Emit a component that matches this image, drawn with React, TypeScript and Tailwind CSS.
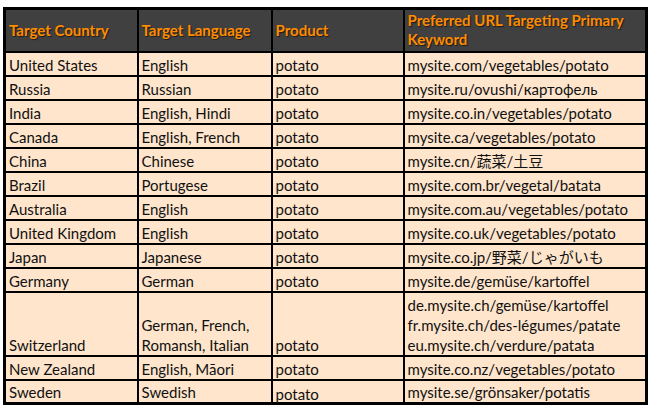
import React from 'react'

type Row = { country: string; language: string[]; product: string; urls: string[] }

const rows: Row[] = [
  { country: 'United States', language: ['English'], product: 'potato', urls: ['mysite.com/vegetables/potato'] },
  { country: 'Russia', language: ['Russian'], product: 'potato', urls: ['mysite.ru/ovushi/картофель'] },
  { country: 'India', language: ['English, Hindi'], product: 'potato', urls: ['mysite.co.in/vegetables/potato'] },
  { country: 'Canada', language: ['English, French'], product: 'potato', urls: ['mysite.ca/vegetables/potato'] },
  { country: 'China', language: ['Chinese'], product: 'potato', urls: ['mysite.cn/蔬菜/土豆'] },
  { country: 'Brazil', language: ['Portugese'], product: 'potato', urls: ['mysite.com.br/vegetal/batata'] },
  { country: 'Australia', language: ['English'], product: 'potato', urls: ['mysite.com.au/vegetables/potato'] },
  { country: 'United Kingdom', language: ['English'], product: 'potato', urls: ['mysite.co.uk/vegetables/potato'] },
  { country: 'Japan', language: ['Japanese'], product: 'potato', urls: ['mysite.co.jp/野菜/じゃがいも'] },
  { country: 'Germany', language: ['German'], product: 'potato', urls: ['mysite.de/gemüse/kartoffel'] },
  {
    country: 'Switzerland',
    language: ['German, French,', 'Romansh, Italian'],
    product: 'potato',
    urls: ['de.mysite.ch/gemüse/kartoffel', 'fr.mysite.ch/des-légumes/patate', 'eu.mysite.ch/verdure/patata'],
  },
  { country: 'New Zealand', language: ['English, Māori'], product: 'potato', urls: ['mysite.co.nz/vegetables/potato'] },
  { country: 'Sweden', language: ['Swedish'], product: 'potato', urls: ['mysite.se/grönsaker/potatis'] },
]

const th = "border-2 border-black pl-[3px] pr-1 align-middle text-left font-bold text-[#ff8c00] [text-shadow:1px_1px_1px_rgba(0,0,0,0.6)]"
const td = "border-2 border-black pl-[3px] pr-1 pb-0 align-bottom leading-[20px]"

const App = () => {
  return (
    <div className="w-[650px] h-[411px] bg-white pt-[7px] pl-[3px] font-['Lato','Noto_Sans_CJK_JP',sans-serif] text-[15px] text-[#111]">
      <table className="w-[642px] table-fixed border-collapse border-[3px] border-black bg-[#fee5cc]">
        <colgroup>
          <col className="w-[133px]" />
          <col className="w-[134px]" />
          <col className="w-[132px]" />
          <col className="w-[243px]" />
        </colgroup>
        <thead>
          <tr className="h-[43px] bg-[#404040] leading-[19px]">
            <th className={th}>Target Country</th>
            <th className={th}>Target Language</th>
            <th className={th}>Product</th>
            <th className={th}>Preferred URL Targeting Primary Keyword</th>
          </tr>
        </thead>
        <tbody>
          {rows.map((r) => (
            <tr key={r.country} className={r.urls.length > 1 ? 'h-[64px]' : 'h-[24px]'}>
              <td className={td}>{r.country}</td>
              <td className={td}>
                {r.language.map((l) => (
                  <div key={l}>{l}</div>
                ))}
              </td>
              <td className={r.country === 'Sweden' ? td + ' [&>div]:translate-y-[2px]' : td}>
                <div>{r.product}</div>
              </td>
              <td className={td}>
                {r.urls.map((u) => (
                  <div key={u} className="whitespace-nowrap">{u}</div>
                ))}
              </td>
            </tr>
          ))}
        </tbody>
      </table>
    </div>
  )
}

export default App
